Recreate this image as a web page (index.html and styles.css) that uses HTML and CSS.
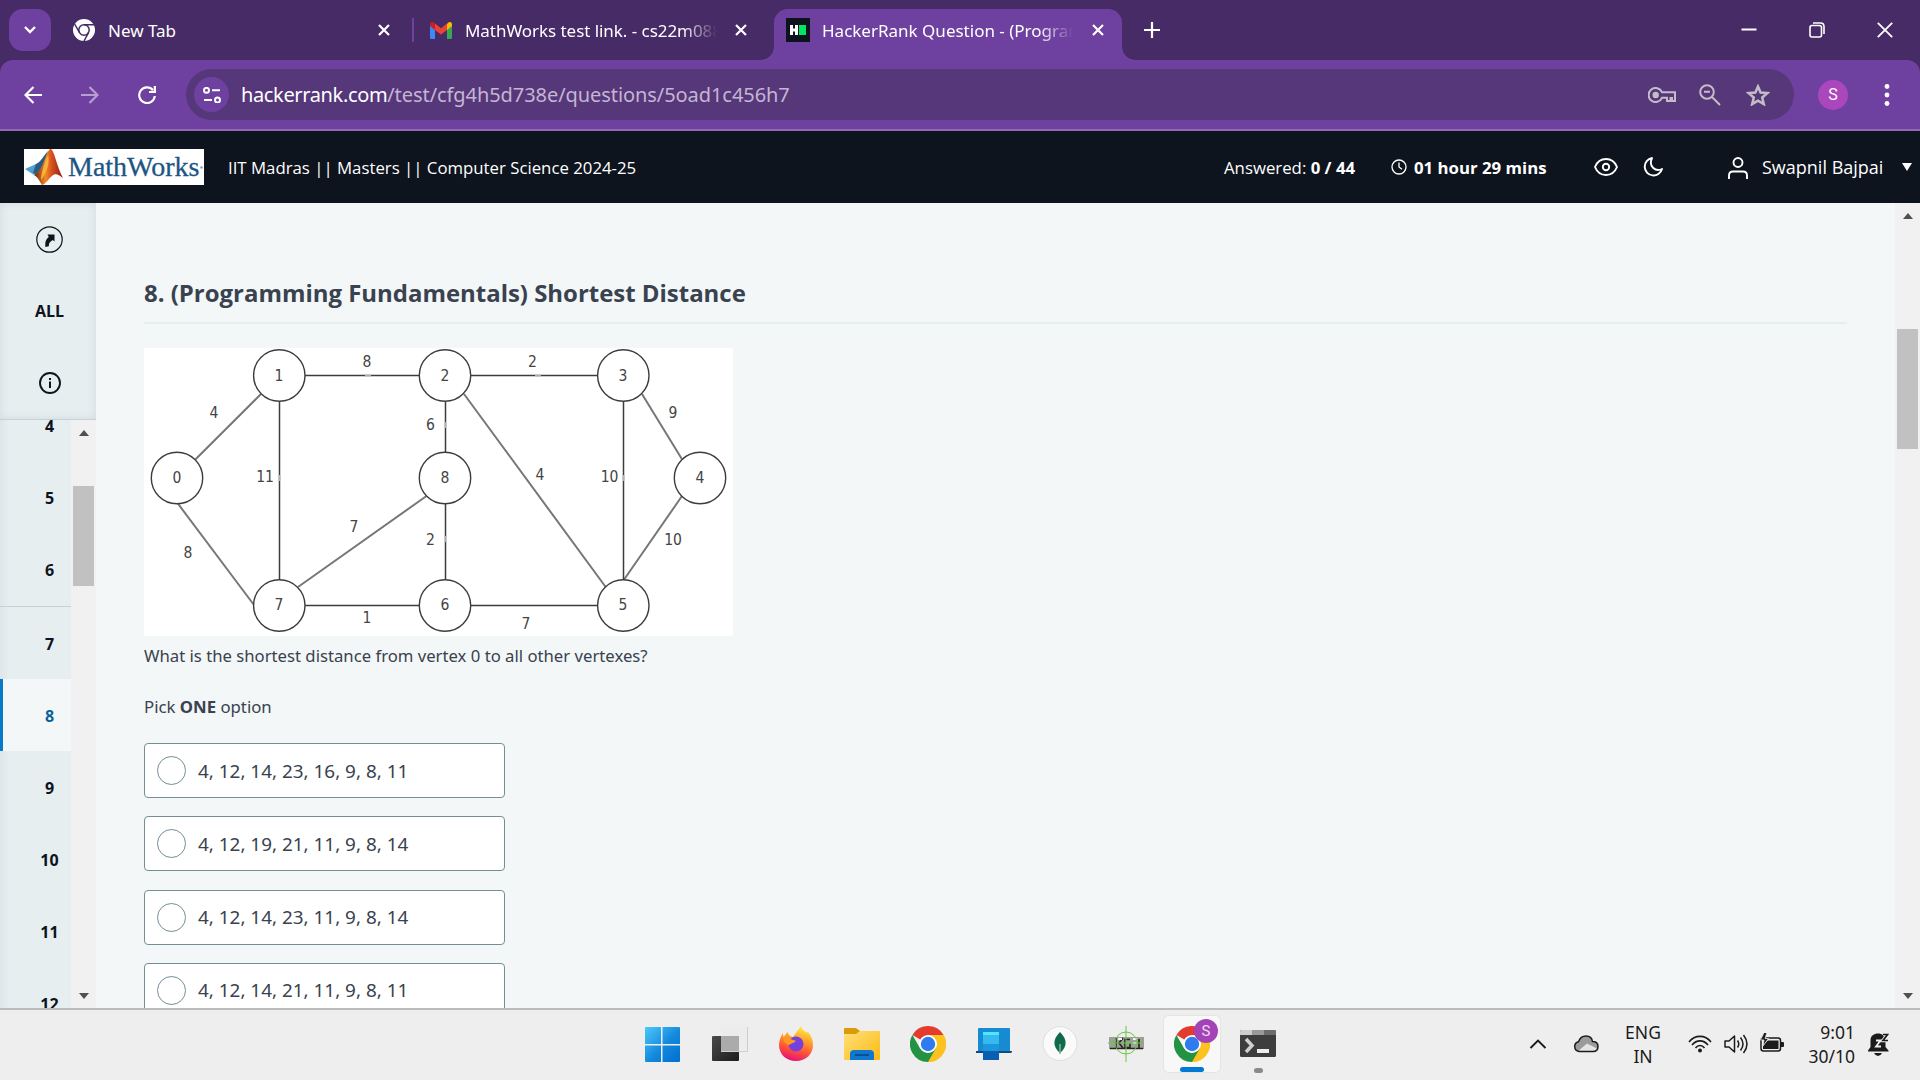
FILE: index.html
```html
<!DOCTYPE html>
<html lang="en">
<head>
<meta charset="utf-8">
<title>HackerRank Question</title>
<link rel="stylesheet" href="styles.css">
</head>
<body>
<div class="screen">
  <div class="tabstrip">
    <button class="tab-search"><svg width="14" height="10" viewBox="0 0 14 10"><path d="M2 2l5 5 5-5" fill="none" stroke="#fff" stroke-width="2.4"/></svg></button>
    <div class="tab tab-new">
      <svg class="favicon" width="22" height="22" viewBox="0 0 22 22"><circle cx="11" cy="11" r="11" fill="#fff"/><g fill="none" stroke="#472b66" stroke-width="1.5"><circle cx="11" cy="11" r="5.2"/><path d="M11 5.8h10M6.5 13.600L1.600 5M15.500 13.600L11 22"/></g></svg>
      <span class="tab-title t-new">New Tab</span>
      <svg class="tab-x" width="12" height="12" viewBox="0 0 12 12"><path d="M1 1l10 10M11 1L1 11" stroke="#fff" stroke-width="2.2"/></svg>
    </div>
    <i class="tab-sep"></i>
    <div class="tab tab-mail">
      <svg class="favicon" width="22" height="17" viewBox="0 0 22 17"><path d="M0 3v12.500Q0 17 1.500 17H5V7z" fill="#4285f4"/><path d="M22 3v12.500Q22 17 20.500 17H17V7z" fill="#34a853"/><path d="M17 2v6l5-4V2.500C22 0 19.500-.5 18 .8z" fill="#fbbc04"/><path d="M0 2.500C0 0 2.500-.5 4 .8L5 1.600V8L0 4z" fill="#c5221f"/><path d="M5 1.600l6 4.700 6-4.700V8l-6 4.600L5 8z" fill="#ea4335"/></svg>
      <span class="tab-title t-mail">MathWorks test link. - cs22m088</span>
      <svg class="tab-x" width="12" height="12" viewBox="0 0 12 12"><path d="M1 1l10 10M11 1L1 11" stroke="#fff" stroke-width="2.200"/></svg>
    </div>
    <div class="tab tab-active">
      <svg class="favicon" width="24" height="24" viewBox="0 0 24 24"><path d="M0 0h24v24H0z" fill="#0e141e"/><path d="M4 7h3v3.500h2V7h3v10H9v-3.500H7V17H4z" fill="#fff"/><path d="M13 7h7v10h-7z" fill="#00e662"/></svg>
      <span class="tab-title t-act">HackerRank Question - (Program</span>
      <svg class="tab-x" width="12" height="12" viewBox="0 0 12 12"><path d="M1 1l10 10M11 1L1 11" stroke="#fff" stroke-width="2.200"/></svg>
    </div>
    <svg class="tab-add" width="16" height="16" viewBox="0 0 16 16"><path d="M8 0v16M0 8h16" stroke="#fff" stroke-width="2.200"/></svg>
    <div class="window-controls">
      <svg width="16" height="16" viewBox="0 0 16 16"><path d="M.5 7.500h15" stroke="#fff" stroke-width="2"/></svg>
      <svg width="16" height="16" viewBox="0 0 16 16"><g fill="none" stroke="#fff" stroke-width="1.600"><rect x="1" y="3.500" width="11.500" height="11.500" rx="2"/><path d="M4 1h7.500q3.500 0 3.500 3.500V12"/></g></svg>
      <svg width="16" height="16" viewBox="0 0 16 16"><path d="M.8.8l14.400 14.400M15.200.8L.8 15.200" stroke="#fff" stroke-width="1.800"/></svg>
    </div>
  </div>
  <div class="toolbar-bg"><div class="toolbar">
    <svg class="nav-back" width="18" height="18" viewBox="0 0 18 18"><path d="M18 9H2M9.500 1L1.500 9l8 8" fill="none" stroke="#fff" stroke-width="2.200"/></svg>
    <svg class="nav-fwd" width="18" height="18" viewBox="0 0 18 18"><path d="M0 9h16M8.500 1l8 8-8 8" fill="none" stroke="#b69fd0" stroke-width="2.200"/></svg>
    <svg class="nav-reload" width="18" height="18" viewBox="0 0 18 18"><path d="M15 4.200A7.800 7.800 0 1 0 16.800 10" fill="none" stroke="#fff" stroke-width="2.200"/><path d="M18 0v7h-7V5h4.700V0z" fill="#fff"/></svg>
    <div class="omnibox">
      <span class="site-info"><svg width="18" height="16" viewBox="0 0 18 16"><g fill="none" stroke="#fff" stroke-width="2"><circle cx="3.500" cy="3.300" r="2.500"/><path d="M9 3.300h8M1 13h8"/><circle cx="14.500" cy="13" r="2.500"/></g></svg></span>
      <span class="url"><b>hackerrank.com</b>/test/cfg4h5d738e/questions/5oad1c456h7</span>
      <svg class="ic-key" width="28" height="16" viewBox="0 0 28 16"><g fill="none" stroke="#c4bdc6" stroke-width="2"><path d="M14 5.200A7 7 0 1 0 14 10.800h5V14h3.500v-3H24v3h3V5.200z"/></g><circle cx="7.700" cy="8" r="3.200" fill="#c4bdc6"/></svg>
      <svg class="ic-zoom" width="22" height="22" viewBox="0 0 22 22"><g fill="none" stroke="#c4bdc6" stroke-width="2"><circle cx="8" cy="8" r="6.800"/><path d="M13 13l8 8M5 7.800h6"/></g></svg>
      <svg class="ic-star" width="24" height="22" viewBox="0 0 24 22"><path d="M12 2.500l2.600 6 6.800.6-5.200 4.400 1.600 6.600-5.800-3.500-5.800 3.500 1.600-6.600-5.200-4.400 6.800-.6z" fill="none" stroke="#c4bdc6" stroke-width="2.500"/></svg>
    </div>
    <span class="profile">S</span>
    <svg class="kebab" width="6" height="22" viewBox="0 0 6 22"><g fill="#fff"><circle cx="3" cy="2.500" r="2.400"/><circle cx="3" cy="11" r="2.400"/><circle cx="3" cy="19.500" r="2.400"/></g></svg>
  </div></div>
  <header class="site-header">
    <div class="mw-logo">
      <svg width="40" height="36" viewBox="0 0 40 36"><defs><linearGradient id="fl" x1="0" x2="1"><stop offset="0" stop-color="#6b1d12"/><stop offset=".4" stop-color="#f08a24"/><stop offset=".6" stop-color="#d9531e"/><stop offset="1" stop-color="#8e1c12"/></linearGradient></defs><path d="M1 20l11-5 4 5-6 6z" fill="#4fa0d0"/><path d="M12 15c5-2 8-9 12-13l-4 15-8 8-3-1z" fill="#2a5a86"/><path d="M10 26c5-3 9-10 12-19 2-5 4-9 6-6 3 4 5 17 11 28-5-4-8-5-11-2-3 2-6 8-10 9-2-3-4-8-8-10z" fill="url(#fl)"/><path d="M24 6c2 7-1 18-7 25 0-6 3-16 7-25z" fill="#f6b23c"/></svg>
      <span class="mw-name">MathWorks</span>
      <svg width="3" height="3" viewBox="0 0 3 3"><circle cx="1.500" cy="1.500" r="1.200" fill="#7d9db8"/></svg>
    </div>
    <span class="test-name">IIT Madras || Masters || Computer Science 2024-25</span>
    <span class="answered">Answered: <b>0 / 44</b></span>
    <svg class="ic-clock" width="16" height="16" viewBox="0 0 16 16"><g fill="none" stroke="#fff" stroke-width="1.300"><circle cx="8" cy="8" r="7"/><path d="M8 3.500V8l3 2.300"/></g></svg>
    <b class="time-left">01 hour 29 mins</b>
    <svg class="ic-eye" width="24" height="18" viewBox="0 0 24 18"><g fill="none" stroke="#fff" stroke-width="1.900"><path d="M1 9c2-5 6-8 11-8s9 3 11 8c-2 5-6 8-11 8S3 14 1 9z"/><circle cx="12" cy="9" r="3.200"/></g></svg>
    <svg class="ic-moon" width="20" height="20" viewBox="0 0 20 20"><path d="M9 1a8.800 8.800 0 1 0 10 11C13 15 5 10 9 1z" fill="none" stroke="#fff" stroke-width="1.900" stroke-linejoin="round"/></svg>
    <svg class="ic-user" width="20" height="22" viewBox="0 0 20 22"><g fill="none" stroke="#fff" stroke-width="1.900"><circle cx="10" cy="5.500" r="4.500"/><path d="M1 22v-3.500q0-4 4-4h10q4 0 4 4V22"/></g></svg>
    <span class="user-name">Swapnil Bajpai</span>
    <i class="caret"></i>
  </header>
  <div class="workspace">
    <aside class="sidebar">
      <div class="side-top">
        <svg class="ic-go" width="27" height="27" viewBox="0 0 27 27"><circle cx="13.500" cy="13.500" r="12.700" fill="none" stroke="#0e141e" stroke-width="1.200"/><path d="M9.300 21v-3.500c0-3 1.500-5 3.500-6.500L11.500 8.500H18.500v7l-1.700-1.500c-2.800 1.500-4 3-4 6.200z" fill="#0e141e"/></svg>
        <b class="all">ALL</b>
        <svg class="ic-info" width="22" height="22" viewBox="0 0 22 22"><circle cx="11" cy="11" r="10" fill="none" stroke="#0e141e" stroke-width="1.900"/><path d="M10 6h2v2h-2zM10 9.500h2V16h-2z" fill="#0e141e"/></svg>
      </div>
      <div class="side-list">
        <nav class="questions">
          <a>4</a><a>5</a><a class="section-end">6</a><a>7</a><a class="current">8</a><a>9</a><a>10</a><a>11</a><a>12</a>
        </nav>
        <div class="scrollbar">
          <i class="arrow-up"></i><i class="thumb side-thumb"></i><i class="arrow-down"></i>
        </div>
      </div>
    </aside>
    <main class="content">
      <h1>8. (Programming Fundamentals) Shortest Distance</h1>
      <svg class="graph" width="589" height="288" viewBox="0 0 589 288">
        <g class="diag"><path d="M51.600 111.300L117 46M34 155.700L110 257M154 239L282.500 148M320 46L461.700 239M498 46L538 111.300M538 148L480.300 231.300"/></g>
        <g class="edge"><path d="M135 27.500H479M135 257.500H479M135.500 28V257M301.500 28V257M479.500 28V257"/></g>
        <g class="gap"><path d="M221 27.500h6M391 27.500h6M135.500 127v6M301.500 74v6M301.500 188v6M479.500 127v6"/></g>
        <g class="node"><circle cx="33" cy="130" r="25.700"/><circle cx="135.300" cy="27.500" r="25.700"/><circle cx="301" cy="27.500" r="25.700"/><circle cx="479.300" cy="27.500" r="25.700"/><circle cx="301" cy="130" r="25.700"/><circle cx="556" cy="130" r="25.700"/><circle cx="135.300" cy="257.500" r="25.700"/><circle cx="301" cy="257.500" r="25.700"/><circle cx="479.300" cy="257.500" r="25.700"/></g>
        <g class="num"><text x="33" y="134.500">0</text><text x="135" y="32.500">1</text><text x="301" y="32.500">2</text><text x="479" y="32.500">3</text><text x="301" y="134.500">8</text><text x="556" y="134.500">4</text><text x="135" y="262">7</text><text x="301" y="262">6</text><text x="479" y="262">5</text>
        <text x="223" y="18.500">8</text><text x="388.500" y="18.500">2</text><text x="70" y="69.500">4</text><text x="529" y="69.500">9</text><text x="286.500" y="82">6</text><text x="121" y="133.500">11</text><text x="396" y="132">4</text><text x="465.500" y="133.500">10</text><text x="44" y="209.500">8</text><text x="210" y="184">7</text><text x="286.500" y="197">2</text><text x="529" y="197">10</text><text x="223" y="275">1</text><text x="382" y="281">7</text></g>
      </svg>
      <p class="prompt">What is the shortest distance from vertex 0 to all other vertexes?</p>
      <p class="pick">Pick <b>ONE</b> option</p>
      <div class="options">
        <label class="option"><i class="radio"></i><span>4, 12, 14, 23, 16, 9, 8, 11</span></label>
        <label class="option"><i class="radio"></i><span>4, 12, 19, 21, 11, 9, 8, 14</span></label>
        <label class="option"><i class="radio"></i><span>4, 12, 14, 23, 11, 9, 8, 14</span></label>
        <label class="option"><i class="radio"></i><span>4, 12, 14, 21, 11, 9, 8, 11</span></label>
      </div>
    </main>
    <div class="scrollbar main-scroll">
      <i class="arrow-up"></i><i class="thumb main-thumb"></i><i class="arrow-down"></i>
    </div>
  </div>
  <footer class="taskbar">
    <div class="apps">
      <svg class="app-start" viewBox="0 0 36 36"><defs><linearGradient id="w" x1="0" y1="0" x2="1" y2="1"><stop offset="0" stop-color="#4cc8fa"/><stop offset=".55" stop-color="#1388dc"/><stop offset="1" stop-color="#0070cf"/></linearGradient></defs><path d="M1 2q0-1 1-1h15v17H1zM18.500 1H35q1 0 1 1v16H18.500zM1 19.500h16V36H2q-1 0-1-1zM18.500 19.500H36V35q0 1-1 1H18.500z" fill="url(#w)"/></svg>
      <svg viewBox="0 0 36 36"><defs><linearGradient id="tv" x1="0" y1="0" x2="1" y2="1"><stop offset="0" stop-color="#4a4a4a"/><stop offset="1" stop-color="#1c1c1c"/></linearGradient></defs><rect x="0" y="10" width="27" height="25" rx="1" fill="url(#tv)"/><rect x="9" y="1" width="27" height="25" rx="1" fill="#ececec"/><rect x="9" y="10" width="18" height="15" fill="#ababab"/><path d="M9 25.500h27M35.500 1v25" stroke="#cfcfcf" fill="none"/></svg>
      <svg viewBox="0 0 36 36"><defs><linearGradient id="ff" x1=".7" y1="0" x2=".4" y2="1"><stop offset="0" stop-color="#fff04a"/><stop offset=".35" stop-color="#ffa72a"/><stop offset=".7" stop-color="#ff5038"/><stop offset="1" stop-color="#e3127a"/></linearGradient></defs><path d="M23 0c1 4 4 5 6 7 0-1 0-1 1-1 3 3 5 8 5 13 0 9-7 16-17 16S1 28 1 19c0-5 2-9 4-12 0 2 0 3 1 4 1-2 2-4 4-5 0 3 2 4 5 5l8-11z" fill="url(#ff)"/><circle cx="18" cy="18" r="7.500" fill="#7540dc"/><path d="M5 12c5 0 8 1 13 3-2 2-4 2-7 4-3-1-5-3-6-7z" fill="#ff9b1c"/></svg>
      <svg viewBox="0 0 36 36"><defs><linearGradient id="fo" x1="0" y1="0" x2="1" y2="1"><stop offset="0" stop-color="#ffe07a"/><stop offset="1" stop-color="#fdb913"/></linearGradient></defs><path d="M0 3q0-1 1-1h11l4 3v6H0z" fill="#dc9b08"/><path d="M0 8h12l4-3h20v28q0 1-1 1H1q-1 0-1-1z" fill="url(#fo)"/><path d="M6 34v-6q0-4 4-4h16q4 0 4 4v6z" fill="#0f78cc"/><path d="M11 29h14" stroke="#0a4f94" stroke-width="2"/></svg>
      <svg viewBox="0 0 36 36"><g id="chrome"><path d="M18 18L2.400 9A18 18 0 0 1 33.600 9z" fill="#e33b2e"/><path d="M18 18V9h15.600A18 18 0 0 1 18 36z" fill="#fcc31e"/><path d="M2.400 9l7.800 13.500L18 27v9A18 18 0 0 1 2.400 9z" fill="#229342"/><path d="M25.800 22.500L18 36A18 18 0 0 0 33.600 9H18z" fill="#fcc31e"/><path d="M18 27l7.800-4.500L18 36z" fill="#229342"/><circle cx="18" cy="18" r="9" fill="#fff"/><circle cx="18" cy="18" r="7.200" fill="#2f7bf0"/></g></svg>
      <svg viewBox="0 0 36 36"><path d="M2 3q0-1 1-1h30q1 0 1 1v22H2z" fill="#168bd2"/><path d="M0 25h36v1l-1 1H0z" fill="#0f4a86"/><rect x="7" y="6" width="16" height="28" fill="#0b5fae"/><path d="M7 6h16v4H7z" fill="#50e6ff"/><path d="M7 9h16v9H7z" fill="#35b9ef"/><path d="M7 18h16v7H7z" fill="#1a98de"/></svg>
      <svg viewBox="0 0 36 36"><circle cx="18" cy="17.500" r="17" fill="#fafafa" stroke="#dedede"/><path d="M18 6c8 8 7 15 0 21-7-6-8-13 0-21z" fill="#106a4a"/><path d="M18 18v10" stroke="#86b59d" stroke-width="1.500"/></svg>
      <svg viewBox="0 0 36 36"><rect x="1" y="11" width="35" height="12" fill="#9ba09b"/><g fill="none" stroke="#2a2320" stroke-width="1.600"><path d="M2 22.500h33M8 12v10M15 12l-4 5 4 5M22 13.500h-5v8h5v-4M31 13v9"/></g><path d="M10 13h4M25 13h4M25 17h4" stroke="#f4f4f4" stroke-width="2"/><g stroke="#67c83f" fill="none"><path d="M18 0v36M0 17h36"/><circle cx="18" cy="17" r="11"/></g></svg>
      <div class="app-active">
        <svg viewBox="0 0 36 36"><use href="#chrome"/></svg>
        <span class="app-badge">S</span><i class="run-bar"></i>
      </div>
      <div class="app-term">
        <svg viewBox="0 0 36 36"><rect y="4" width="36" height="27" rx="1.500" fill="#3d3d3d"/><path d="M0 9V5.500Q0 4 1.500 4H12v5z" fill="#ccc"/><path d="M12 4h12v5H12z" fill="#999"/><path d="M24 4h10.500Q36 4 36 5.500V9H24z" fill="#6c6c6c"/><path d="M6 13l6 6.500L6 26" fill="none" stroke="#d0d0d0" stroke-width="3.500"/><rect x="17" y="23" width="12" height="4" fill="#eee"/></svg>
        <i class="run-dot"></i>
      </div>
    </div>
    <div class="tray">
      <svg class="t-up" width="18" height="10" viewBox="0 0 18 10"><path d="M1.500 9L9 1.500 16.500 9" fill="none" stroke="#1b1b1b" stroke-width="1.900"/></svg>
      <svg class="t-cloud" width="26" height="18" viewBox="0 0 26 18"><path d="M6 16.500a5 5 0 0 1-.5-9.800C7 2.500 10 1 13 1c3.500 0 6 2 6.500 5.500 3.500 0 5.500 2 5.500 5s-2 5-5 5z" fill="#9b9b9b"/><path d="M6 16.500c0-2 3-3.500 8-8l10 5q-1.500 3-4 3z" fill="#e4e4e4"/><path d="M6 16.500a5 5 0 0 1-.5-9.800C7 2.500 10 1 13 1c3.500 0 6 2 6.500 5.500 3.500 0 5.500 2 5.500 5s-2 5-5 5z" fill="none" stroke="#1b1b1b" stroke-width="1.500"/></svg>
      <div class="lang"><span>ENG</span><span>IN</span></div>
      <svg class="t-wifi" width="24" height="18" viewBox="0 0 24 18"><g fill="none" stroke="#1b1b1b" stroke-width="1.600"><path d="M1 7C7-.5 17-.5 23 7M4 10c4.500-5.500 11.500-5.500 16 0M7.500 13c2.500-3.300 6.500-3.300 9 0"/></g><circle cx="12" cy="15.500" r="2" fill="#1b1b1b"/></svg>
      <svg class="t-vol" width="24" height="22" viewBox="0 0 24 22"><g fill="none" stroke="#1b1b1b" stroke-width="1.500" stroke-linejoin="round"><path d="M1 8h4l5.500-5v16L5 14H1z"/><path d="M13.500 7.500q2.500 3.500 0 7M16.500 4.500q5 6.500 0 13M19.500 2q7 9 0 18"/></g></svg>
      <svg class="t-bat" width="24" height="20" viewBox="0 0 24 20"><rect x="1" y="5" width="19.500" height="13" rx="2.500" fill="none" stroke="#1b1b1b" stroke-width="1.500"/><path d="M8 7.500h10.500v8.500H3v-4zM21 9h2q1 0 1 1v3q0 1-1 1h-2z" fill="#1b1b1b"/><path d="M4-.5L.5 7H4l-1 6 5.500-7.500H5L7-.5z" fill="#1b1b1b" stroke="#eee" stroke-width=".8"/></svg>
      <div class="clock"><span>9:01</span><span>30/10</span></div>
      <svg class="t-bell" width="22" height="24" viewBox="0 0 22 24"><path d="M2.500 8.500C2.500 3.500 6 1.500 10 1.500s7.500 2 7.500 7V15l3 3.500v1H0v-1L2.500 15zM6 21h8q-1.500 3-4 3t-4-3z" fill="#1b1b1b"/><path d="M8 8.500h4.500l-4.500 6h5" fill="none" stroke="#eee" stroke-width="1.800"/><path d="M15 2.500h4.500l-4.500 6h5" fill="none" stroke="#eee" stroke-width="3.500"/><path d="M15 2.500h4.500l-4.500 6h5" fill="none" stroke="#1b1b1b" stroke-width="1.700"/></svg>
    </div>
  </footer>
</div>
</body>
</html>
```
FILE: styles.css
```css
* { box-sizing: border-box; }
body { margin: 0; overflow: hidden; font-family: "Open Sans", "Noto Sans", sans-serif; }
svg { display: block; flex: none; }
b { font-weight: 700; }
.screen { width: 1920px; height: 1080px; display: flex; flex-direction: column; overflow: hidden; background: #f3f7f8; }

/* browser tab strip */
.tabstrip { height: 60px; flex: none; background: #472b66; display: flex; align-items: center; color: #fff; font: 17px "Noto Sans", sans-serif; }
.tab-search { width: 42px; height: 42px; margin-left: 9px; padding: 0; border: 0; border-radius: 14px; background: #6e41a0; display: flex; align-items: center; justify-content: center; }
.tab { display: flex; align-items: center; }
.tab-title { overflow: hidden; white-space: nowrap; line-height: 28px; margin-top: 2px; }
.tab-new { width: 339px; margin-left: 22px; }
.t-new { width: 255px; margin-left: 13px; }
.tab-new .tab-x { margin-left: 15px; }
.tab-sep { width: 2px; height: 24px; background: #6e41a0; }
.tab-mail { width: 344px; margin-left: 16px; }
.t-mail { width: 252px; margin-left: 13px; letter-spacing: -.05px; }
.t-mail, .t-act { -webkit-mask-image: linear-gradient(90deg, #000 86%, transparent); mask-image: linear-gradient(90deg, #000 86%, transparent); }
.tab-mail .tab-x { margin-left: 18px; }
.tab-active { position: relative; width: 348px; height: 51px; align-self: flex-end; padding: 0 0 9px 12px; background: #6e41a0; border-radius: 14px 14px 0 0; }
.tab-active::before, .tab-active::after { content: ""; position: absolute; bottom: 0; width: 13px; height: 13px; }
.tab-active::before { left: -13px; background: radial-gradient(circle at 0 0, transparent 12.5px, #6e41a0 13px); }
.tab-active::after { right: -13px; background: radial-gradient(circle at 100% 0, transparent 12.5px, #6e41a0 13px); }
.t-act { width: 251px; margin-left: 12px; }
.tab-active .tab-x { margin-left: 19px; }
.tab-add { margin-left: 22px; }
.window-controls { margin-left: auto; margin-right: 27px; display: flex; gap: 52px; }

/* toolbar */
.toolbar-bg { height: 71px; flex: none; background: #472b66; border-bottom: 2px solid #9268b9; }
.toolbar { height: 69px; background: #6e41a0; border-radius: 13px 13px 0 0; display: flex; align-items: center; }
.nav-back { margin-left: 24px; }
.nav-fwd { margin-left: 39px; }
.nav-reload { margin-left: 39px; }
.omnibox { width: 1608px; height: 51px; margin-left: 30px; padding-left: 8px; border-radius: 26px; background: #56377a; display: flex; align-items: center; }
.site-info { width: 35px; height: 35px; border-radius: 50%; background: #6e41a0; display: flex; align-items: center; justify-content: center; }
.url { margin-left: 12px; font: 20px/28px "Noto Sans", sans-serif; letter-spacing: -.07px; color: #c5b5d3; white-space: nowrap; }
.url b { font-weight: 400; letter-spacing: -.36px; color: #fff; }
.ic-key { margin-left: auto; }
.ic-zoom { margin-left: 23px; }
.ic-star { margin-left: 25px; margin-right: 24px; }
.profile { width: 30px; height: 30px; margin-left: 24px; border-radius: 50%; background: #ab47bc; color: #fff; font: 16px/30px Roboto, sans-serif; text-align: center; }
.kebab { margin-left: 36px; }

/* test header */
.site-header { height: 72px; flex: none; background: #0e141e; color: #fff; display: flex; align-items: center; padding-left: 24px; font-size: 16.8px; white-space: nowrap; }
.mw-logo { width: 180px; height: 36px; background: #fff; display: flex; align-items: center; overflow: hidden; }
.mw-name { margin-left: 4px; font: 28px/34px "Liberation Serif", serif; color: #1d5583; -webkit-text-stroke: .3px #1d5583; }
.test-name { width: 409px; margin-left: 24px; }
.answered { width: 132px; margin-left: 587px; }
.ic-clock { margin-left: 35px; }
.time-left { width: 134px; margin-left: 7px; }
.ic-eye { margin-left: 46px; }
.ic-moon { margin-left: 25px; }
.ic-user { margin-left: 65px; margin-top: 2px; }
.user-name { width: 122px; margin-left: 14px; font-size: 18px; }
.caret { margin-left: 18px; border: 5.500px solid transparent; border-top: 8px solid #fff; border-bottom: 0; }

/* workspace */
.workspace { height: 805px; flex: none; display: flex; }
.sidebar { width: 96px; flex: none; display: flex; flex-direction: column; background: #e7eef0; color: #0e141e; }
.side-top { height: 217px; flex: none; display: flex; flex-direction: column; align-items: center; border-bottom: 1px solid #c6d1d6; box-shadow: inset 0 0 9px rgba(70, 90, 110, .13); padding: 23px 0 0 3px; }
.all { margin-top: 46px; line-height: 24px; font-size: 16px; }
.ic-info { margin-top: 49px; }
.side-list { height: 588px; display: flex; overflow: hidden; }
.questions { width: 71px; height: 588px; overflow: hidden; background: linear-gradient(90deg, #dfe6e9, #e7eef0 9px); }
.questions a { display: block; height: 72px; padding-left: 28px; text-align: center; font-size: 16px; font-weight: 700; line-height: 74px; }
.questions a:first-child { margin-top: -31px; }
.questions .section-end { height: 74px; border-bottom: 1px solid #c6d1d6; }
.questions .current { color: #0b6298; background: #f3f7f8; border-left: 3px solid #0879c4; padding-left: 25px; }
.scrollbar { width: 25px; height: 100%; flex: none; background: #f1f1f1; display: flex; flex-direction: column; align-items: center; }
.arrow-up { margin-top: 10px; border: 5.500px solid transparent; border-top: 0; border-bottom: 6px solid #505050; }
.arrow-down { margin-top: auto; margin-bottom: 9px; border: 5.500px solid transparent; border-bottom: 0; border-top: 6px solid #505050; }
.thumb { width: 21px; background: #c1c1c1; }
.side-thumb { height: 100px; margin-top: 50px; }
.main-thumb { height: 120px; margin-top: 110px; }
.content { flex: 1; overflow: hidden; padding: 0 48px; color: #39424e; }
h1 { margin: 0; height: 121px; padding-top: 74px; border-bottom: 2px solid #e7eef0; font-size: 23.95px; line-height: 32px; white-space: nowrap; }
.graph { margin-top: 24px; background: #fff; }
.diag { fill: none; stroke: #777; stroke-width: 2; }
.edge { fill: none; stroke: #3c3c3c; stroke-width: 1.500; }
.gap { stroke: #b0b0b0; stroke-width: 1.600; }
.node { fill: #fff; stroke: #3c3c3c; stroke-width: 1.400; }
.num { font: 15.500px "DejaVu Sans Condensed", "DejaVu Sans", sans-serif; fill: #444; text-anchor: middle; }
p { margin: 0; }
.prompt { margin-top: 7px; font: 16.7px/26px "Noto Sans", sans-serif; }
.pick { margin-top: 25px; font: 16.76px/26px "Noto Sans", sans-serif; }
.options { margin-top: 23px; display: flex; flex-direction: column; gap: 18.300px; }
.option { width: 361px; height: 55px; flex: none; display: flex; align-items: center; padding-left: 12px; border: 1px solid #738f93; border-radius: 4px; background: #fff; font: 18.9px "Noto Sans", sans-serif; }
.radio { width: 29px; height: 29px; margin-right: 12px; border: 1px solid #738f93; border-radius: 50%; }

/* taskbar */
.taskbar { height: 72px; flex: none; border-top: 2px solid #bcbcbc; background: #eee; display: flex; color: #1b1b1b; }
.apps { width: 640px; margin-left: 644px; display: flex; align-items: flex-start; gap: 30px; padding-top: 6px; }
.apps svg { width: 36px; height: 36px; margin-top: 10px; }
.apps .app-start { margin-right: 2px; }
.app-active { position: relative; width: 56px; height: 56px; margin: 0 -10px; padding-left: 10px; background: #f8f8f8; border-radius: 5px; box-shadow: 0 0 0 1px #e4e4e4; }
.app-badge { position: absolute; left: 30px; top: 3px; width: 24px; height: 24px; border-radius: 50%; background: #a443b8; color: #f1d8f5; font: 15px/24px Roboto, sans-serif; text-align: center; }
.run-bar { position: absolute; left: 16px; bottom: 0; width: 24px; height: 5px; border-radius: 3px; background: #0078d4; }
.app-term { display: flex; flex-direction: column; align-items: center; }
.run-dot { width: 9px; height: 5px; margin-top: 6px; border-radius: 3px; background: #8a8a8a; }
.tray { display: flex; align-items: center; height: 68px; font: 17.500px/24px "Noto Sans", sans-serif; }
.t-up { margin-left: 245px; }
.t-cloud { margin-left: 26px; }
.lang, .clock { display: flex; flex-direction: column; align-items: center; }
.lang { width: 60px; margin-left: 14px; }
.t-wifi { margin-left: 15px; }
.t-vol { margin-left: 12px; }
.t-bat { margin-left: 12px; margin-top: -2px; }
.clock { width: 60px; margin-left: 11px; align-items: flex-end; }
.t-bell { margin-left: 13px; }
```
